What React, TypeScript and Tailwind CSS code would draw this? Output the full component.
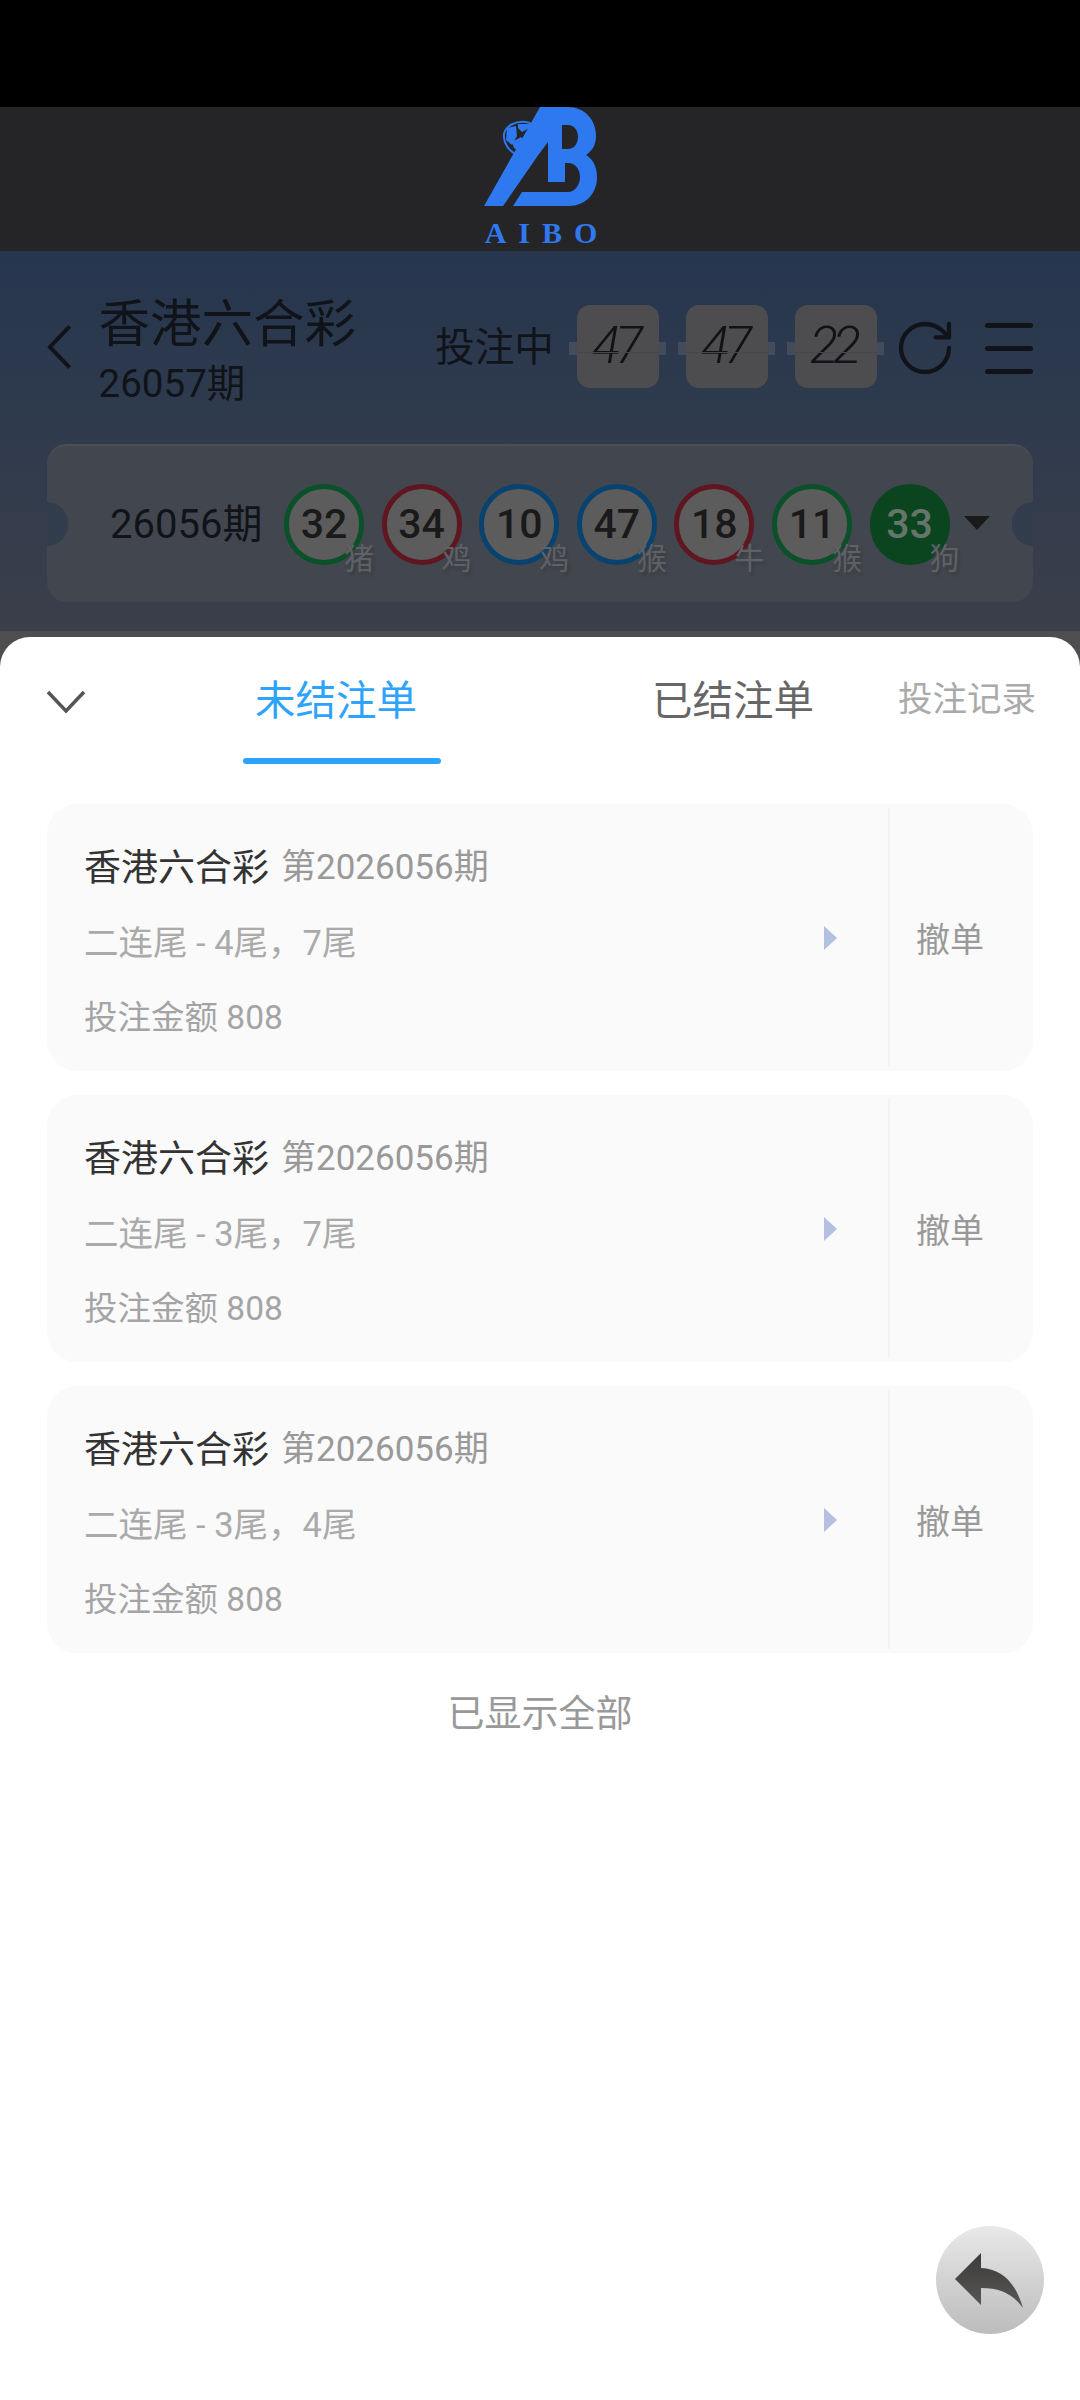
import React from "react";
import { RotateCw } from "lucide-react";

const balls = [
  { num: "32", zodiac: "猪", ring: "border-[#0a5028]", fill: "bg-[#5c5c5c]", text: "text-[#1a1a1a]" },
  { num: "34", zodiac: "鸡", ring: "border-[#5f1620]", fill: "bg-[#5c5c5c]", text: "text-[#1a1a1a]" },
  { num: "10", zodiac: "鸡", ring: "border-[#08426f]", fill: "bg-[#5c5c5c]", text: "text-[#1a1a1a]" },
  { num: "47", zodiac: "猴", ring: "border-[#08426f]", fill: "bg-[#5c5c5c]", text: "text-[#1a1a1a]" },
  { num: "18", zodiac: "牛", ring: "border-[#5f1620]", fill: "bg-[#5c5c5c]", text: "text-[#1a1a1a]" },
  { num: "11", zodiac: "猴", ring: "border-[#0a5028]", fill: "bg-[#5c5c5c]", text: "text-[#1a1a1a]" },
  { num: "33", zodiac: "狗", ring: "border-[#0a4520]", fill: "bg-[#0a4520]", text: "text-[#66756b]" },
];

const bets = ["二连尾 - 4尾，7尾", "二连尾 - 3尾，7尾", "二连尾 - 3尾，4尾"];

const Logo = () => (
  <svg width="114" height="100" viewBox="0 0 114 100" className="block ml-[2px]">
    <path
      fill="#2f79f0"
      fillRule="evenodd"
      d="M0 99 L56 0 L84 0 C100 0 112 12 112 29 C112 38 108 44 102 48 C109 52 113 60 113 70 C113 87 101 99 85 99 L29 99 L38 85 L84 85 C91 85 96 78 96 70 C96 62 91 56 84 56 L81 56 L81 75 L64 75 L64 35 L55 47 L19 99 Z M78 18 L78 42 L84 42 C90 42 94 37 94 30 C94 23 90 18 84 18 Z"
    />
    <path fill="#2f79f0" d="M23 21 L32 19 L33 29 L28 38 L22 33 Z M34 17 L46 17 L47 20 L38 25 L34 21 Z M28 35 L37 30 L41 35 L35 44 L30 41 Z" />
    <path fill="none" stroke="#2f79f0" strokeWidth="2" d="M36 49 C24 45 19 35 20 27 C22 18 32 14 42 15 C45 15 47 17 48 18" />
  </svg>
);

const FlipCard = ({ value }: { value: string }) => (
  <div className="relative w-[97px] h-[83px] flex justify-center">
    <div className="absolute left-0 right-0 top-[37px] h-[13px] bg-[#444c5c]" />
    <div className="relative w-[82px] h-[83px] rounded-[13px] bg-[#4d4d4f] flex items-center justify-center">
      <span className="italic font-light text-[52px] leading-none tracking-[-5px] text-[#101216] pr-[5px] [font-family:Roboto,sans-serif]">
        {value}
      </span>
      <div className="absolute left-0 right-0 top-[47px] h-[1px] bg-[#45474d]" />
    </div>
  </div>
);

const Ball = ({ num, zodiac, ring, fill, text }: (typeof balls)[number]) => (
  <div className="relative w-[80px] h-[81px] mt-[2px]">
    <div className={`w-[80px] h-[81px] rounded-full border-[5px] ${ring} ${fill} flex items-center justify-center`}>
      <span className={`text-[41px] font-medium leading-none ${text}`}>{num}</span>
    </div>
    <span className="absolute left-[60px] top-[60px] text-[30px] leading-[30px] text-[#5f6165] [text-shadow:2px_3px_3px_#3a3d43]">
      {zodiac}
    </span>
  </div>
);

const BetCard = ({ bet }: { bet: string }) => (
  <div className="flex h-[267px] rounded-[30px] bg-[#fafafa]">
    <div className="flex-1 pl-[37px] pr-[51px] flex items-center">
      <div className="flex-1 mt-[12px]">
        <div className="h-[75px] flex items-center text-[37px] text-[#333]">
          香港六合彩
          <span className="ml-[12px] text-[35px] text-[#999]">第2026056期</span>
        </div>
        <div className="h-[75px] flex items-center text-[34.5px] text-[#aaa]">{bet}</div>
        <div className="h-[75px] flex items-center text-[33.5px] text-[#a4a4a4]">投注金额 808</div>
      </div>
      <div className="w-0 h-0 border-y-[12px] border-y-transparent border-l-[13px] border-l-[#b4c0e0]" />
    </div>
    <div className="my-[4px] w-[2px] bg-[#f4f4f4]" />
    <div className="w-[143px] pr-[23px] pt-[6px] flex items-center justify-center text-[34px] text-[#999]">撤单</div>
  </div>
);

const App = () => {
  return (
    <div className="relative h-[2400px] w-[1080px] overflow-hidden bg-white [font-family:Roboto,'Noto_Sans_CJK_SC',sans-serif]">
      <div className="h-[107px] bg-black" />

      <div className="h-[144px] bg-[#252528] flex flex-col items-center">
        <Logo />
        <div className="mt-[12px] pl-[14px] text-[30px] leading-[28px] font-bold tracking-[12px] text-[#2f79f0] [font-family:'Liberation_Serif',serif]">
          AIBO
        </div>
      </div>

      <div className="h-[380px] px-[47px] bg-gradient-to-b from-[#26364f] to-[#3a3f4a]">
        <div className="h-[193px] flex items-center text-[#101318]">
          <svg width="26" height="46" viewBox="0 0 26 46" className="mt-[-1px]">
            <path d="M23 2 L3 23 L23 44" fill="none" stroke="#101318" strokeWidth="4" />
          </svg>
          <div className="ml-[26px] w-[342px] mt-[7px]">
            <div className="text-[51.5px] leading-[66px] whitespace-nowrap">香港六合彩</div>
            <div className="text-[38.5px] leading-[52px]">26057期</div>
          </div>
          <div className="text-[39.5px] w-[136px] whitespace-nowrap">投注中</div>
          <div className="flex gap-[12px] -mt-[3px]">
            <FlipCard value="47" />
            <FlipCard value="47" />
            <FlipCard value="22" />
          </div>
          <RotateCw size={64} strokeWidth={1.6} className="ml-[9px] shrink-0 text-[#101318]" />
          <div className="ml-[28px] mt-[2px] flex flex-col gap-[18px] shrink-0">
            <div className="w-[48px] h-[5px] rounded-full bg-[#101318]" />
            <div className="w-[48px] h-[5px] rounded-full bg-[#101318]" />
            <div className="w-[48px] h-[5px] rounded-full bg-[#101318]" />
          </div>
        </div>

        <div className="relative h-[158px] rounded-[20px] bg-[#42474f] border-t-2 border-[#4b4e54] pl-[63px] pb-[2px] flex items-center overflow-hidden">
          <div className="absolute -left-[21px] top-[56px] w-[42px] h-[44px] rounded-full bg-[#313c4d]" />
          <div className="absolute -right-[21px] top-[56px] w-[42px] h-[44px] rounded-full bg-[#313c4d]" />
          <div className="w-[174px] text-[40px] text-[#101318] mb-[-4px]">26056期</div>
          <div className="flex gap-[17.6px]">
            {balls.map((b, i) => (
              <Ball key={i} {...b} />
            ))}
          </div>
          <div className="ml-[14px] w-0 h-0 border-x-[13px] border-x-transparent border-t-[14px] border-t-[#1a1a1a]" />
        </div>
      </div>

      <div className="bg-[#4e4e50] pt-[6px]">
        <div className="h-[1763px] rounded-t-[30px] bg-white">
          <div className="relative h-[128px] flex items-center">
            <svg width="40" height="24" viewBox="0 0 40 24" className="ml-[46px] mt-[1px]">
              <path d="M2 2 L20 21 L38 2" fill="none" stroke="#555" strokeWidth="3.5" />
            </svg>
            <div className="ml-[169px] text-[40.5px] text-[#2ea3fb] w-[397px]">未结注单</div>
            <div className="text-[40.5px] text-[#666] w-[246px]">已结注单</div>
            <div className="text-[34.5px] text-[#aaa] whitespace-nowrap -mt-[3px]">投注记录</div>
            <div className="absolute left-[243px] top-[121px] w-[198px] h-[6px] rounded-full bg-[#2ea3fb]" />
          </div>

          <div className="mt-[39px] mx-[47px] flex flex-col gap-[24px]">
            {bets.map((bet) => (
              <BetCard key={bet} bet={bet} />
            ))}
          </div>

          <div className="mt-[37px] text-center text-[37px] leading-[50px] text-[#999]">已显示全部</div>
        </div>
      </div>

      <div className="absolute left-[936px] top-[2226px] w-[108px] h-[108px] rounded-full bg-gradient-to-b from-[#e9e9e9] to-[#bcbcbc] flex items-center justify-center">
        <svg width="72" height="56" viewBox="0 0 72 56">
          <defs>
            <linearGradient id="arrow" x1="0" y1="0" x2="0" y2="1">
              <stop offset="0" stopColor="#3c3a3a" />
              <stop offset="1" stopColor="#5a5856" />
            </linearGradient>
          </defs>
          <path d="M1 27 L27 1 L27 16 C49 17 62 32 69 56 C59 42 46 36 27 36 L27 53 Z" fill="url(#arrow)" />
        </svg>
      </div>
    </div>
  );
};

export default App;
